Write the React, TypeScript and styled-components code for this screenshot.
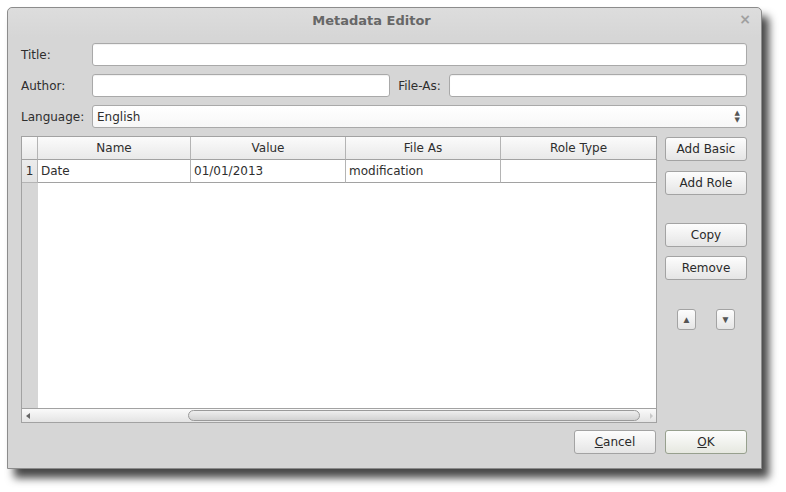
import React from "react";
import styled, { createGlobalStyle } from "styled-components";

const Global = createGlobalStyle`
  html, body { margin: 0; padding: 0; background: #ffffff; }
  body { font-family: "DejaVu Sans", "Liberation Sans", sans-serif; font-size: 12px; color: #2e2e2e; }
`;

const Page = styled.div`
  width: 786px;
  height: 492px;
  padding: 7px 0 0 7px;
  box-sizing: border-box;
`;

const Window = styled.div`
  width: 755px;
  height: 462px;
  box-sizing: border-box;
  border: 1px solid #8c8c8c;
  border-radius: 5px 5px 0 0;
  background: #d6d6d6;
  box-shadow: 7px 9px 9px rgba(0, 0, 0, 0.72);
  display: flex;
  flex-direction: column;
`;

const TitleBar = styled.div`
  height: 29px;
  flex: none;
  display: flex;
  align-items: center;
  justify-content: center;
  position: relative;
  padding-right: 26px;
  border-radius: 5px 5px 0 0;
  background: linear-gradient(#dddddd, #d6d6d6);
`;

const TitleText = styled.div`
  font-weight: bold;
  font-size: 13px;
  color: #676767;
  margin-top: -4px;
`;

const CloseGlyph = styled.div`
  position: absolute;
  right: 10px;
  top: 3px;
  font-size: 14px;
  color: #a0a0a0;
  font-weight: bold;
`;

const Body = styled.div`
  flex: 1;
  display: flex;
  flex-direction: column;
  padding: 6px 14px 14px 13px;
  min-height: 0;
`;

const Form = styled.div`
  display: grid;
  grid-template-columns: 63px 1fr auto 1fr;
  grid-auto-rows: 23px;
  column-gap: 8px;
  row-gap: 8px;
  align-items: center;
`;

const Label = styled.label`
  white-space: nowrap;
`;

const Field = styled.div<{ $span?: boolean }>`
  grid-column: ${(p) => (p.$span ? "2 / 5" : "auto")};
  height: 23px;
  box-sizing: border-box;
  background: #ffffff;
  border: 1px solid #a9a9a9;
  border-radius: 3px;
  box-shadow: inset 0 1px 1px rgba(0, 0, 0, 0.06);
`;

const Combo = styled.div`
  grid-column: 2 / 5;
  height: 23px;
  box-sizing: border-box;
  background: linear-gradient(#ffffff, #f7f7f7);
  border: 1px solid #a9a9a9;
  border-radius: 3px;
  display: flex;
  align-items: center;
  justify-content: space-between;
  padding: 0 6px 0 4px;
`;

const Spinner = styled.div`
  display: flex;
  flex-direction: column;
  align-items: center;
  font-size: 7px;
  line-height: 7px;
  color: #555;
`;

const Middle = styled.div`
  flex: 1;
  display: flex;
  gap: 8px;
  margin-top: 8px;
  min-height: 0;
`;

const Table = styled.div`
  flex: 1;
  display: flex;
  flex-direction: column;
  border: 1px solid #a2a2a2;
  background: #ffffff;
  box-sizing: border-box;
`;

const TableBody = styled.div`
  flex: 1;
  display: flex;
  flex-direction: column;
  min-height: 0;
  background: linear-gradient(to right, #d6d6d6 0, #d6d6d6 16px, #ffffff 16px);
`;

const Row = styled.div`
  display: grid;
  grid-template-columns: 16px 153px 155px 155px 1fr;
  height: 23px;
  flex: none;
`;

const HeadCell = styled.div<{ $corner?: boolean }>`
  display: flex;
  align-items: center;
  justify-content: center;
  background: linear-gradient(#fbfbfb, #e9e9e9);
  border-right: 1px solid #b4b4b4;
  border-bottom: 1px solid #a2a2a2;
  &:last-child { border-right: none; }
`;

const RowNum = styled.div`
  display: flex;
  align-items: center;
  justify-content: center;
  background: linear-gradient(#ececec, #e2e2e2);
  border-right: 1px solid #b4b4b4;
  border-bottom: 1px solid #b4b4b4;
`;

const Cell = styled.div`
  display: flex;
  align-items: center;
  padding-left: 3px;
  background: #ffffff;
  border-right: 1px solid #b4b4b4;
  border-bottom: 1px solid #a2a2a2;
  &:last-child { border-right: none; }
`;

const Filler = styled.div`
  flex: 1;
`;

const ScrollBar = styled.div`
  height: 13px;
  flex: none;
  border-top: 1px solid #a2a2a2;
  background: linear-gradient(#fafafa, #e4e4e4);
  display: flex;
  align-items: center;
  padding: 0 3px 0 4px;
`;

const ScrollArrow = styled.div<{ $dim?: boolean }>`
  width: 0;
  height: 0;
  border-top: 3px solid transparent;
  border-bottom: 3px solid transparent;
  ${(p) =>
    p.$dim
      ? "border-left: 3px solid #c8c8c8;"
      : "border-right: 4px solid #666666;"}
`;

const Track = styled.div`
  flex: 1;
  display: flex;
  align-items: center;
  padding: 0 10px 0 158px;
  height: 100%;
`;

const Thumb = styled.div`
  flex: 1;
  height: 11px;
  box-sizing: border-box;
  border: 1px solid #9a9a9a;
  border-radius: 6px;
  background: linear-gradient(#eeeeee, #d2d2d2);
`;

const Side = styled.div`
  width: 82px;
  flex: none;
  display: flex;
  flex-direction: column;
  padding-top: 1px;
`;

const Button = styled.button<{ $top?: number; $ok?: boolean }>`
  height: 24px;
  width: 82px;
  margin-top: ${(p) => p.$top ?? 0}px;
  box-sizing: border-box;
  border: 1px solid ${(p) => (p.$ok ? "#97a08e" : "#a3a3a3")};
  border-radius: 3px;
  background: ${(p) =>
    p.$ok
      ? "linear-gradient(#fdfdfd, #e6e8e0)"
      : "linear-gradient(#fdfdfd, #e5e5e5)"};
  font-family: "DejaVu Sans", "Liberation Sans", sans-serif;
  font-size: 12px;
  color: #2a2a2a;
  padding: 0;
  display: flex;
  align-items: center;
  justify-content: center;
`;

const ArrowRow = styled.div`
  display: flex;
  justify-content: space-between;
  padding: 0 12px;
  margin-top: 29px;
`;

const ArrowButton = styled.button`
  width: 19px;
  height: 21px;
  box-sizing: border-box;
  border: 1px solid #a3a3a3;
  border-radius: 3px;
  background: linear-gradient(#fdfdfd, #e5e5e5);
  padding: 0;
  font-size: 10px;
  color: #555;
  display: flex;
  align-items: center;
  justify-content: center;
`;

const Footer = styled.div`
  display: flex;
  justify-content: flex-end;
  gap: 9px;
  margin-top: 7px;
`;

const U = styled.span`
  text-decoration: underline;
`;

export default function App() {
  return (
    <Page>
      <Global />
      <Window>
        <TitleBar>
          <TitleText>Metadata Editor</TitleText>
          <CloseGlyph>×</CloseGlyph>
        </TitleBar>
        <Body>
          <Form>
            <Label>Title:</Label>
            <Field $span />
            <Label>Author:</Label>
            <Field />
            <Label>File-As:</Label>
            <Field />
            <Label>Language:</Label>
            <Combo>
              <span>English</span>
              <Spinner>
                <span>▲</span>
                <span>▼</span>
              </Spinner>
            </Combo>
          </Form>
          <Middle>
            <Table>
              <TableBody>
                <Row>
                  <HeadCell $corner />
                  <HeadCell>Name</HeadCell>
                  <HeadCell>Value</HeadCell>
                  <HeadCell>File As</HeadCell>
                  <HeadCell>Role Type</HeadCell>
                </Row>
                <Row>
                  <RowNum>1</RowNum>
                  <Cell>Date</Cell>
                  <Cell>01/01/2013</Cell>
                  <Cell>modification</Cell>
                  <Cell />
                </Row>
                <Filler />
              </TableBody>
              <ScrollBar>
                <ScrollArrow />
                <Track>
                  <Thumb />
                </Track>
                <ScrollArrow $dim />
              </ScrollBar>
            </Table>
            <Side>
              <Button>Add Basic</Button>
              <Button $top={10}>Add Role</Button>
              <Button $top={28}>Copy</Button>
              <Button $top={9}>Remove</Button>
              <ArrowRow>
                <ArrowButton>▲</ArrowButton>
                <ArrowButton>▼</ArrowButton>
              </ArrowRow>
            </Side>
          </Middle>
          <Footer>
            <Button>
              <U>C</U>ancel
            </Button>
            <Button $ok>
              <U>O</U>K
            </Button>
          </Footer>
        </Body>
      </Window>
    </Page>
  );
}
